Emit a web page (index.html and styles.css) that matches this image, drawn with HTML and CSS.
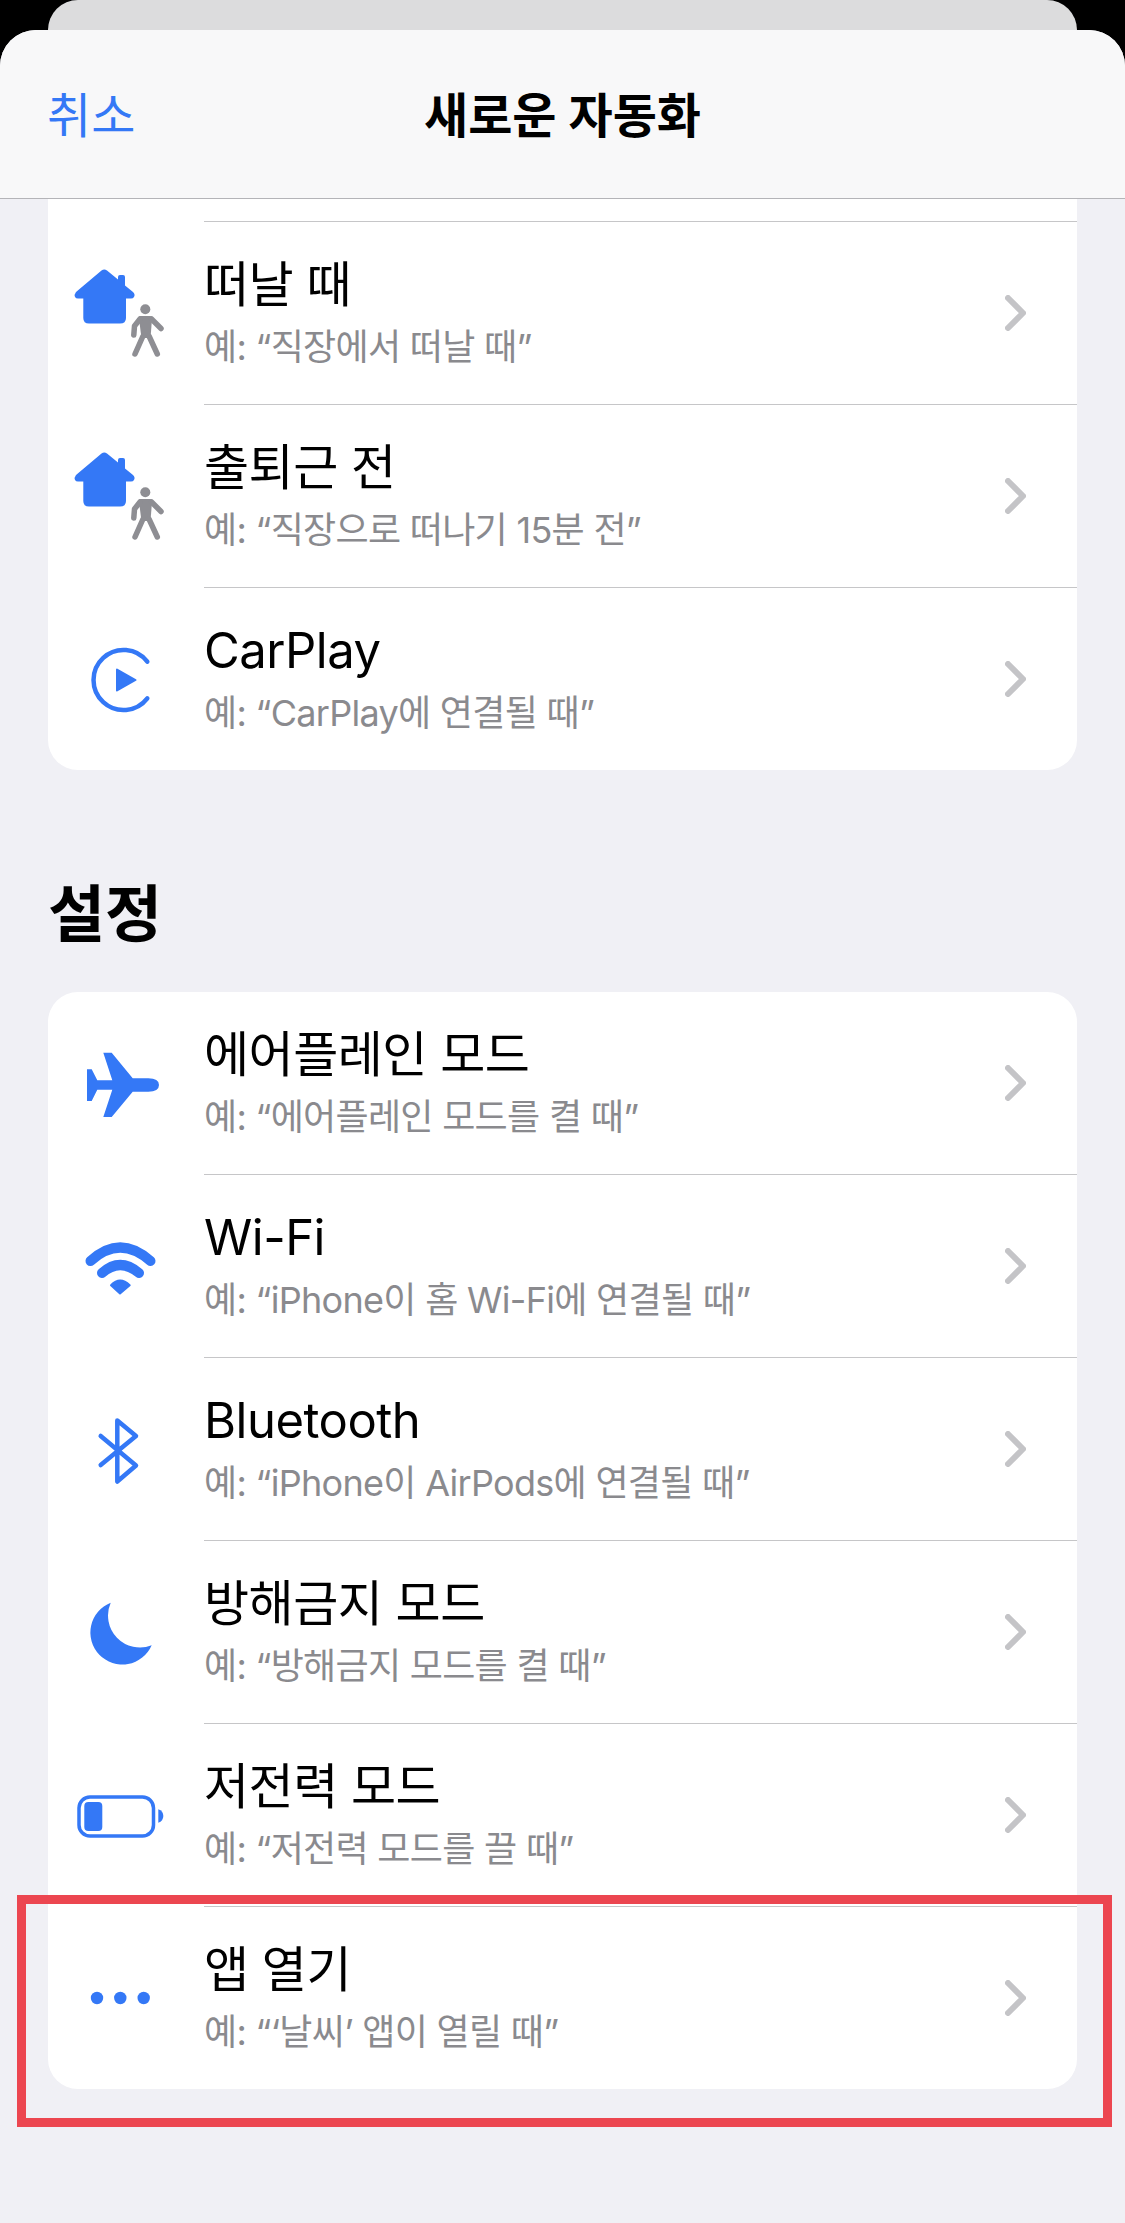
FILE: index.html
```html
<!DOCTYPE html>
<html lang="ko">
	<head>
		<meta charset="utf-8">
		<title>새로운 자동화</title>
		<link rel="stylesheet" href="styles.css">
	</head>
	<body>
		<div class="back-card"></div>
		<div class="sheet">
			<div class="nav">
				<span class="nav-cancel">취소</span>
				<span class="nav-title">새로운 자동화</span>
			</div>
			<div class="content">
				<div class="card">
					<div class="stub"></div>
					<div class="row">
						<div class="icon">
							<svg viewBox="0 0 100 100">
								<path class="fill" d="M31.5 6.5 Q34.3 4.3 37 6.5 L48 15.5 V13 Q48 11 50 11 H53 Q55 11 55 13 V21.5 L63 28 Q65.5 30.5 64 33 Q63 34.5 61 34.5 H56 V54 Q56 59.5 50 59.5 H19 Q13.3 59.5 13.3 54 V34.5 H8 Q6 34.5 5 33 Q4 30.5 6 28 Z"/>
								<g class="walker">
									<circle cx="75.3" cy="45.3" r="5"/>
									<path d="M70 52 H80 Q82 52 82 55 L80.5 74 H71.5 L69 55 Q69 52 70 52 Z"/>
									<path class="walker-limb" d="M70 55 L64.5 62 L63.8 71 M81.5 55 L91 64.5 M73 72 L65 90 M79 72 L87.3 90"/>
								</g>
							</svg>
						</div>
						<div class="row-body">
							<div class="row-text">
								<div class="row-title">떠날 때</div>
								<div class="row-sub">예: “직장에서 떠날 때”</div>
							</div>
							<svg class="chevron" viewBox="0 0 21 36"><path d="M3 3 L18 18 L3 33"/></svg>
						</div>
					</div>
					<div class="row">
						<div class="icon">
							<svg viewBox="0 0 100 100">
								<path class="fill" d="M31.5 6.5 Q34.3 4.3 37 6.5 L48 15.5 V13 Q48 11 50 11 H53 Q55 11 55 13 V21.5 L63 28 Q65.5 30.5 64 33 Q63 34.5 61 34.5 H56 V54 Q56 59.5 50 59.5 H19 Q13.3 59.5 13.3 54 V34.5 H8 Q6 34.5 5 33 Q4 30.5 6 28 Z"/>
								<g class="walker">
									<circle cx="75.3" cy="45.3" r="5"/>
									<path d="M70 52 H80 Q82 52 82 55 L80.5 74 H71.5 L69 55 Q69 52 70 52 Z"/>
									<path class="walker-limb" d="M70 55 L64.5 62 L63.8 71 M81.5 55 L91 64.5 M73 72 L65 90 M79 72 L87.3 90"/>
								</g>
							</svg>
						</div>
						<div class="row-body">
							<div class="row-text">
								<div class="row-title">출퇴근 전</div>
								<div class="row-sub">예: “직장으로 떠나기 15분 전”</div>
							</div>
							<svg class="chevron" viewBox="0 0 21 36"><path d="M3 3 L18 18 L3 33"/></svg>
						</div>
					</div>
					<div class="row row-last">
						<div class="icon">
							<svg viewBox="0 0 100 100">
								<path class="line" d="M77.3 32.7 A30 30 0 1 0 77.3 69.3"/>
								<path class="fill rounded" d="M47 40.5 L65.5 51 L47 61.5 Z"/>
							</svg>
						</div>
						<div class="row-body">
							<div class="row-text">
								<div class="row-title">CarPlay</div>
								<div class="row-sub">예: “CarPlay에 연결될 때”</div>
							</div>
							<svg class="chevron" viewBox="0 0 21 36"><path d="M3 3 L18 18 L3 33"/></svg>
						</div>
					</div>
				</div>

				<h2 class="section-title">설정</h2>

				<div class="card">
					<div class="row">
						<div class="icon">
							<svg viewBox="0 0 100 100">
								<path class="fill" d="M33.3 18.7 H41.7 L62.7 44.3 H78.3 Q89 44.3 89 51 Q89 57.7 78.3 57.7 H62.7 L41.7 83 H33.3 L42.3 55.7 H27.3 L21.7 67 H17 V35.3 H21.7 L27.3 46.3 H42.3 Z"/>
							</svg>
						</div>
						<div class="row-body">
							<div class="row-text">
								<div class="row-title">에어플레인 모드</div>
								<div class="row-sub">예: “에어플레인 모드를 켤 때”</div>
							</div>
							<svg class="chevron" viewBox="0 0 21 36"><path d="M3 3 L18 18 L3 33"/></svg>
						</div>
					</div>
					<div class="row">
						<div class="icon">
							<svg viewBox="0 0 100 100">
								<path class="line wide" d="M20.5 44 Q50 17 80.5 44"/>
								<path class="line wide" d="M32 56 Q50 40 69 56"/>
								<path class="fill rounded" d="M41 68.3 Q50 59 59.7 68.3 L50 76.5 Z"/>
							</svg>
						</div>
						<div class="row-body">
							<div class="row-text">
								<div class="row-title">Wi-Fi</div>
								<div class="row-sub">예: “iPhone이 홈 Wi-Fi에 연결될 때”</div>
							</div>
							<svg class="chevron" viewBox="0 0 21 36"><path d="M3 3 L18 18 L3 33"/></svg>
						</div>
					</div>
					<div class="row">
						<div class="icon">
							<svg viewBox="0 0 100 100">
								<path class="line" d="M30.7 36 L66 65.5 L47.3 81.5 V20.5 L66 36 L30.7 65"/>
							</svg>
						</div>
						<div class="row-body">
							<div class="row-text">
								<div class="row-title">Bluetooth</div>
								<div class="row-sub">예: “iPhone이 AirPods에 연결될 때”</div>
							</div>
							<svg class="chevron" viewBox="0 0 21 36"><path d="M3 3 L18 18 L3 33"/></svg>
						</div>
					</div>
					<div class="row">
						<div class="icon">
							<svg viewBox="0 0 100 100">
								<path class="fill" d="M40.7 19.7 A32 32 0 1 0 81.7 62.3 A32 32 0 0 1 40.7 19.7 Z"/>
							</svg>
						</div>
						<div class="row-body">
							<div class="row-text">
								<div class="row-title">방해금지 모드</div>
								<div class="row-sub">예: “방해금지 모드를 켤 때”</div>
							</div>
							<svg class="chevron" viewBox="0 0 21 36"><path d="M3 3 L18 18 L3 33"/></svg>
						</div>
					</div>
					<div class="row">
						<div class="icon">
							<svg viewBox="0 0 100 100">
								<rect class="line thin" x="9" y="31" width="74.5" height="39" rx="11"/>
								<rect class="fill" x="14.3" y="36" width="18" height="29" rx="4"/>
								<path class="fill" d="M88.3 43.3 Q93.3 45 93.3 50 Q93.3 55 88.3 56.7 Z"/>
							</svg>
						</div>
						<div class="row-body">
							<div class="row-text">
								<div class="row-title">저전력 모드</div>
								<div class="row-sub">예: “저전력 모드를 끌 때”</div>
							</div>
							<svg class="chevron" viewBox="0 0 21 36"><path d="M3 3 L18 18 L3 33"/></svg>
						</div>
					</div>
					<div class="row row-last">
						<div class="icon">
							<svg viewBox="0 0 100 100">
								<circle class="fill" cx="27" cy="50" r="6.2"/>
								<circle class="fill" cx="50.3" cy="50" r="6.2"/>
								<circle class="fill" cx="73.7" cy="50" r="6.2"/>
							</svg>
						</div>
						<div class="row-body">
							<div class="row-text">
								<div class="row-title">앱 열기</div>
								<div class="row-sub">예: “‘날씨’ 앱이 열릴 때”</div>
							</div>
							<svg class="chevron" viewBox="0 0 21 36"><path d="M3 3 L18 18 L3 33"/></svg>
						</div>
					</div>
				</div>
			</div>
		</div>
		<div class="highlight"></div>
	</body>
</html>
```
FILE: styles.css
```css
html, body {
	height: 100%;
	margin: 0;
	padding: 0;
	overflow: hidden;
}
body {
	position: relative;
	background-color: #000000;
	font-family: Inter, "Noto Sans CJK KR", sans-serif;
	color: #000000;
}
.back-card {
	height: 30px;
	margin: 0 48px;
	background-color: #dcdcdd;
	border-radius: 36px 36px 0 0;
}
.sheet {
	height: 2193px;
	background-color: #f0f0f5;
	border-radius: 36px 36px 0 0;
	overflow: hidden;
}
.nav {
	position: relative;
	display: flex;
	align-items: center;
	justify-content: center;
	box-sizing: border-box;
	height: 169px;
	padding-bottom: 5px;
	background-color: #f8f8f9;
	border-bottom: 1px solid #b4b4b8;
}
.nav-cancel {
	position: absolute;
	left: 47px;
	font-size: 48px;
	color: #3478f6;
}
.nav-title {
	font-size: 48px;
	font-weight: 600;
}
.content {
	padding: 0 48px;
}
.card {
	background-color: #ffffff;
	border-radius: 30px;
	overflow: hidden;
}
.content .card:first-child {
	border-radius: 0 0 30px 30px;
}
.stub {
	height: 22px;
	margin-left: 156px;
	border-bottom: 1px solid #c6c6c8;
}
.row {
	display: flex;
	height: 183px;
}
.row-last {
	height: 182px;
}
.icon {
	display: flex;
	align-items: center;
	box-sizing: border-box;
	flex-shrink: 0;
	width: 156px;
	padding-left: 22px;
}
.icon svg {
	width: 100px;
	height: 100px;
}
.fill {
	fill: #3478f6;
}
.rounded {
	stroke: #3478f6;
	stroke-width: 2;
	stroke-linejoin: round;
}
.line {
	fill: none;
	stroke: #3478f6;
	stroke-width: 4.5;
	stroke-linecap: round;
	stroke-linejoin: round;
}
.wide {
	stroke-width: 10;
}
.thin {
	stroke-width: 3.5;
}
.walker {
	fill: #8e8e93;
}
.walker-limb {
	fill: none;
	stroke: #8e8e93;
	stroke-width: 5.5;
	stroke-linecap: round;
	stroke-linejoin: round;
}
.row-body {
	flex: 1;
	display: flex;
	align-items: center;
	justify-content: space-between;
	padding-right: 51px;
	border-bottom: 1px solid #c6c6c8;
}
.row-last .row-body {
	border-bottom: none;
}
.row-text {
	padding-bottom: 2px;
}
.row-title {
	font-size: 49px;
	line-height: 62px;
	letter-spacing: -0.5px;
}
.row-sub {
	margin-top: 7px;
	font-size: 36px;
	line-height: 48px;
	letter-spacing: -0.7px;
	color: #8a8a8e;
}
.chevron {
	width: 21px;
	height: 36px;
}
.chevron path {
	fill: none;
	stroke: #c4c4c7;
	stroke-width: 6;
	stroke-linecap: round;
	stroke-linejoin: round;
}
.section-title {
	margin: 0;
	padding: 104px 0 36px;
	height: 82px;
	font-size: 62px;
	line-height: 82px;
	font-weight: 700;
}
.highlight {
	position: absolute;
	left: 17px;
	top: 1895px;
	width: 1095px;
	height: 232px;
	box-sizing: border-box;
	border: 9px solid #ec4650;
}
```
